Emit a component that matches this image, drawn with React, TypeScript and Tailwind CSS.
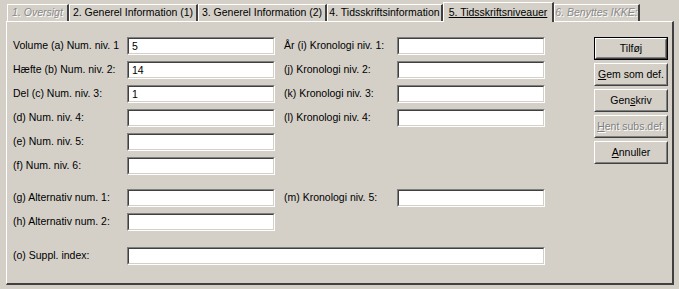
import React from 'react'

const font = { fontFamily: 'Tahoma, "Liberation Sans", Arial, sans-serif' }

interface Tab {
  label: string
  width: string
  active?: boolean
  disabled?: boolean
}

const tabs: Tab[] = [
  { label: '1. Oversigt', width: 'w-[62px]', disabled: true },
  { label: '2. Generel Information (1)', width: 'w-[129px]' },
  { label: '3. Generel Information (2)', width: 'w-[129px]' },
  { label: '4. Tidsskriftsinformation', width: 'w-[116px]' },
  { label: '5. Tidsskriftsniveauer', width: 'w-[111px]', active: true },
  { label: '6. Benyttes IKKE:', width: 'w-[86px]', disabled: true },
]

function Field({ value, wide }: { value?: string; wide?: boolean }) {
  return (
    <div
      className={`${wide ? 'w-[418px]' : 'w-[148px]'} h-[18px] border border-t-[#808080] border-l-[#808080] border-b-white border-r-white`}
    >
      <div className="h-full border border-t-[#404040] border-l-[#404040] border-b-[#d4d0c8] border-r-[#d4d0c8] bg-white pl-[3px] text-[10.5px] leading-[14px] text-black">
        {value}
      </div>
    </div>
  )
}

function Row({ label, value, right, rightLabel, wide }: { label: string; value?: string; right?: boolean; rightLabel?: string; wide?: boolean }) {
  return (
    <div className="flex items-center h-[18px]">
      <div className="w-[114px] text-[10.5px] text-black whitespace-nowrap">{label}</div>
      <Field value={value} wide={wide} />
      {right && (
        <>
          <div className="w-[113px] ml-[9px] text-[10.5px] text-black whitespace-nowrap">{rightLabel}</div>
          <Field />
        </>
      )}
    </div>
  )
}

function Button({ children, isDefault, disabled }: { children: React.ReactNode; isDefault?: boolean; disabled?: boolean }) {
  return (
    <div className={`w-[74px] h-[23px] ${isDefault ? 'border border-black' : ''}`}>
      <div className="h-full border border-t-white border-l-white border-b-[#404040] border-r-[#404040]">
        <div className={`h-full flex items-center justify-center whitespace-nowrap border border-t-[#d4d0c8] border-l-[#d4d0c8] border-b-[#808080] border-r-[#808080] text-[10.5px] ${disabled ? 'text-[#808080] [text-shadow:1px_1px_0_#fff]' : 'text-black'}`}>
          {children}
        </div>
      </div>
    </div>
  )
}

export default function App() {
  return (
    <div className="w-[679px] h-[289px] bg-[#d4d0c8] pl-[6px] pr-[5px] pt-[2px]" style={font}>
      {/* Tabs */}
      <div className="flex items-end h-[19px] pl-[1px]">
        {tabs.map((t) => (
          <div
            key={t.label}
            className={`${t.width} ${t.active ? 'h-[20px] -mb-[1px] bg-[#d4d0c8] z-10 relative' : 'h-[17px]'} border-t border-l border-t-white border-l-white border-r-2 border-r-[#404040] flex items-center justify-center text-[10.5px] whitespace-nowrap overflow-hidden ${t.disabled ? 'italic text-[#8a8a8a] [text-shadow:1px_1px_0_#fff]' : 'text-black'}`}
          >
            <span className={t.active ? 'underline' : ''}>{t.label}</span>
          </div>
        ))}
      </div>

      {/* Panel */}
      <div className="h-[264px] border-l border-t border-l-white border-t-white border-r-2 border-b-2 border-r-[#404040] border-b-[#404040] flex pt-[15px] pl-[6px]">
        <div className="flex flex-col">
          <div className="flex flex-col gap-[6px]">
            <Row label="Volume (a) Num. niv. 1" value="5" right rightLabel="År (i) Kronologi niv. 1:" />
            <Row label="Hæfte (b) Num. niv. 2:" value="14" right rightLabel="(j) Kronologi niv. 2:" />
            <Row label="Del (c) Num. niv. 3:" value="1" right rightLabel="(k) Kronologi niv. 3:" />
            <Row label="(d) Num. niv. 4:" right rightLabel="(l) Kronologi niv. 4:" />
            <Row label="(e) Num. niv. 5:" />
            <Row label="(f) Num. niv. 6:" />
          </div>
          <div className="flex flex-col gap-[6px] mt-[14px]">
            <Row label="(g) Alternativ num. 1:" right rightLabel="(m) Kronologi niv. 5:" />
            <Row label="(h) Alternativ num. 2:" />
          </div>
          <div className="mt-[16px]">
            <Row label="(o) Suppl. index:" wide />
          </div>
        </div>

        <div className="flex flex-col gap-[3px] ml-[49px]">
          <Button isDefault>Tilføj</Button>
          <Button><span><u>G</u>em som def.</span></Button>
          <Button><span>Gen<u>s</u>kriv</span></Button>
          <Button disabled><span><u>H</u>ent subs.def.</span></Button>
          <Button><span><u>A</u>nnuller</span></Button>
        </div>
      </div>
    </div>
  )
}
